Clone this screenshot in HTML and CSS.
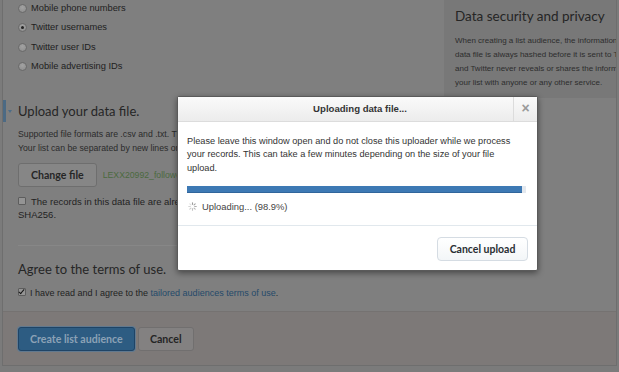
FILE: index.html
```html
<!DOCTYPE html>
<html lang="en">
<head>
  <meta charset="UTF-8" />
  <title>Create list audience</title>
  <link rel="stylesheet" href="styles.css">
</head>
<body>
  <div class="window">
    <div class="card">
      <div class="layout">
        <div class="main">
          <ul class="radio-list">
            <li><span class="radio"></span>Mobile phone numbers</li>
            <li class="selected"><span class="radio"></span>Twitter usernames</li>
            <li><span class="radio"></span>Twitter user IDs</li>
            <li><span class="radio"></span>Mobile advertising IDs</li>
          </ul>

          <section class="step active">
            <h2 class="step-title"><span class="caret"></span>Upload your data file.</h2>
            <p class="hint">Supported file formats are .csv and .txt. The file must contain one record per line.<br>Your list can be separated by new lines or commas.</p>
            <div class="file-row">
              <button class="btn">Change file</button>
              <span class="file-name">LEXX20992_followers.csv</span>
            </div>
            <label class="check-row"><span class="checkbox"></span>The records in this data file are already normalized and hashed with<br>SHA256.</label>
          </section>

          <hr class="divider">

          <section class="step">
            <h2 class="step-title"><span class="caret"></span>Agree to the terms of use.</h2>
            <label class="check-row small"><span class="checkbox checked"></span>I have read and I agree to the <a href="#">tailored audiences terms of use</a>.</label>
          </section>
        </div>

        <aside class="sidebar">
          <h3 class="side-title">Data security and privacy</h3>
          <p>When creating a list audience, the information in your<br>data file is always hashed before it is sent to Twitter,<br>and Twitter never reveals or shares the information in<br>your list with anyone or any other service.</p>
        </aside>
      </div>

      <div class="footer">
        <button class="btn btn-primary">Create list audience</button>
        <button class="btn btn-cancel">Cancel</button>
      </div>
    </div>

    <!-- upload dialog -->
    <div class="modal">
      <div class="modal-header">
        <div class="modal-title">Uploading data file...</div>
        <div class="modal-close">&times;</div>
      </div>
      <div class="modal-body">
        <p class="modal-text">Please leave this window open and do not close this uploader while we process<br>your records. This can take a few minutes depending on the size of your file<br>upload.</p>
        <div class="progress"><div class="progress-bar" style="width: 98.9%"></div></div>
        <div class="status">
          <svg class="spinner" viewBox="0 0 10 10" width="9" height="9">
            <g stroke="#999" stroke-width="1.2" stroke-linecap="round">
              <line x1="5" y1="0.8" x2="5" y2="2.6" opacity="1"/>
              <line x1="8" y1="2" x2="6.7" y2="3.3" opacity="0.9"/>
              <line x1="9.2" y1="5" x2="7.4" y2="5" opacity="0.8"/>
              <line x1="8" y1="8" x2="6.7" y2="6.7" opacity="0.7"/>
              <line x1="5" y1="9.2" x2="5" y2="7.4" opacity="0.6"/>
              <line x1="2" y1="8" x2="3.3" y2="6.7" opacity="0.5"/>
              <line x1="0.8" y1="5" x2="2.6" y2="5" opacity="0.4"/>
              <line x1="2" y1="2" x2="3.3" y2="3.3" opacity="0.3"/>
            </g>
          </svg>
          <span>Uploading... (98.9%)</span>
        </div>
      </div>
      <div class="modal-footer">
        <button class="btn btn-light">Cancel upload</button>
      </div>
    </div>
  </div>
</body>
</html>
```

FILE: styles.css
```css
/* Page behind the dialog is drawn already dimmed */
body {
  margin: 0;
  background: #7b7b7b;
  font-family: "Liberation Sans", Arial, sans-serif;
  overflow: hidden;
}
.window {
  position: relative;
  width: 619px;
  height: 372px;
  overflow: hidden;
}
.card {
  margin-left: 2px;
  width: 613px;
  border: 1px solid #6e6e6e;
  border-top: 0;
  background: #7f7f7f;
  overflow: hidden;
}
.layout {
  display: flex;
  align-items: flex-start;
}
.main {
  flex: 0 0 426px;
  padding: 0 0 11px 15px;
}
.radio-list {
  list-style: none;
  margin: -1px 0 0;
  padding: 0;
  font-size: 9.3px;
  line-height: 19.3px;
  color: #1e1e1e;
}
.radio-list li {
  display: flex;
  align-items: center;
  gap: 4px;
}
.radio {
  width: 7px;
  height: 7px;
  border: 1px solid #6a6a6a;
  border-radius: 50%;
  background: radial-gradient(circle at 50% 35%, #a2a2a2, #8c8c8c);
  position: relative;
}
.selected .radio::after {
  content: "";
  position: absolute;
  left: 2px;
  top: 2px;
  width: 3px;
  height: 3px;
  border-radius: 50%;
  background: #222;
}
.step-title {
  display: flex;
  align-items: center;
  height: 22px;
  margin: 0 0 0 -15px;
  padding-left: 2px;
  border-left: 3px solid transparent;
  font-family: Lato, "Liberation Sans", sans-serif;
  font-weight: 400;
  font-size: 13px;
  color: #262626;
}
.radio-list + .step {
  margin-top: 24px;
}
.step.active .step-title {
  border-left-color: #4c6a84;
}
.caret {
  width: 0;
  height: 0;
  border-top: 3px solid #4d6d88;
  border-left: 2px solid transparent;
  border-right: 2px solid transparent;
  margin-right: 6px;
  visibility: hidden;
}
.step.active .caret {
  visibility: visible;
}
.hint {
  margin: 5px 0 0;
  font-size: 8.7px;
  line-height: 14px;
  color: #2b2b2b;
  white-space: nowrap;
}
.file-row {
  display: flex;
  align-items: center;
  gap: 6px;
  margin-top: 8px;
}
.btn {
  height: 24px;
  padding: 0 12px;
  border: 1px solid #6e6e6e;
  border-radius: 3px;
  background: #868686;
  font-family: Lato, "Liberation Sans", sans-serif;
  font-weight: 700;
  font-size: 10.6px;
  color: #262626;
  white-space: nowrap;
  cursor: pointer;
}
.file-name {
  font-size: 8.7px;
  color: #4b6a40;
}
.check-row {
  display: block;
  margin-top: 8px;
  font-size: 9.5px;
  line-height: 13.3px;
  color: #1f1f1f;
  white-space: nowrap;
}
.check-row.small {
  margin-top: 7px;
  font-size: 9px;
  line-height: 13px;
}
.checkbox {
  display: inline-block;
  position: relative;
  width: 6px;
  height: 6px;
  margin-right: 5px;
  border: 1px solid #5d5d5d;
  border-radius: 1px;
  background: #949494;
}
.checkbox.checked::after {
  content: "";
  position: absolute;
  left: 1px;
  top: -1px;
  width: 2px;
  height: 5px;
  border: solid #151515;
  border-width: 0 1.5px 1.5px 0;
  transform: rotate(40deg);
}
.check-row.small .checkbox {
  margin-right: 4px;
}
.check-row a {
  color: #254a6a;
  text-decoration: none;
}
.divider {
  margin: 23px 15px 0 0;
  height: 0;
  border: 0;
  border-top: 1px solid #878787;
}
.divider + .step {
  margin-top: 12px;
}
.sidebar {
  flex: 1;
  padding: 6px 0 8px 11px;
  background: #787878;
  white-space: nowrap;
  overflow: hidden;
}
.side-title {
  margin: 0;
  font-family: Lato, "Liberation Sans", sans-serif;
  font-weight: 400;
  font-size: 13.5px;
  line-height: 20px;
  color: #252525;
}
.sidebar p {
  margin: 8px 0 0;
  font-size: 8px;
  line-height: 14px;
  color: #2d2d2d;
}
.footer {
  display: flex;
  gap: 3px;
  padding: 15px 15px 14px;
  border-top: 1px solid #757271;
  background: #7d7978;
}
.btn-primary {
  padding: 0 11px;
  background: #2d5c82;
  border-color: #1f4466;
  color: #8ca2b6;
  box-shadow: 0 0 0 1px #61798f;
}
.btn-cancel {
  width: 56px;
  padding: 0;
  background: #838181;
  border-color: #716f6f;
  color: #252525;
}

/* Upload dialog */
.modal {
  position: absolute;
  left: 177px;
  top: 96px;
  width: 359px;
  border: 1px solid #5a5a5a;
  border-radius: 2px;
  background: #fff;
  box-shadow: 0 2px 6px rgba(0, 0, 0, 0.45);
}
.modal-header {
  display: flex;
  height: 24px;
  border-bottom: 1px solid #dcdcdc;
  background: linear-gradient(#fafafa, #ececec);
}
.modal-title {
  flex: 1;
  padding-left: 29px;
  text-align: center;
  font-weight: bold;
  font-size: 9.6px;
  line-height: 24px;
  color: #333;
}
.modal-close {
  width: 23px;
  border-left: 1px solid #dcdcdc;
  text-align: center;
  font-weight: bold;
  font-size: 14px;
  line-height: 23px;
  color: #9a9a9a;
}
.modal-body {
  padding: 13px 10px 11px 9px;
  border-bottom: 1px solid #e1e8ed;
}
.modal-text {
  margin: 0;
  font-size: 9.2px;
  line-height: 13.3px;
  color: #333;
  white-space: nowrap;
}
.progress {
  margin-top: 11px;
  width: 339px;
  height: 7px;
  background: #e3e8ee;
}
.progress-bar {
  height: 100%;
  background: #3d79b4;
  box-shadow: inset 0 -1px #30659b;
}
.status {
  display: flex;
  align-items: center;
  gap: 5px;
  margin-top: 7px;
  padding-left: 1px;
  font-size: 9.4px;
  line-height: 14px;
  color: #444;
}
.modal-footer {
  display: flex;
  justify-content: flex-end;
  padding: 11px 9px 9px;
}
.btn-light {
  width: 91px;
  padding: 0;
  border: 1px solid #d5dce3;
  border-radius: 4px;
  background: linear-gradient(#fff, #f3f6f8);
  color: #292f33;
  font-size: 10.5px;
}
```
